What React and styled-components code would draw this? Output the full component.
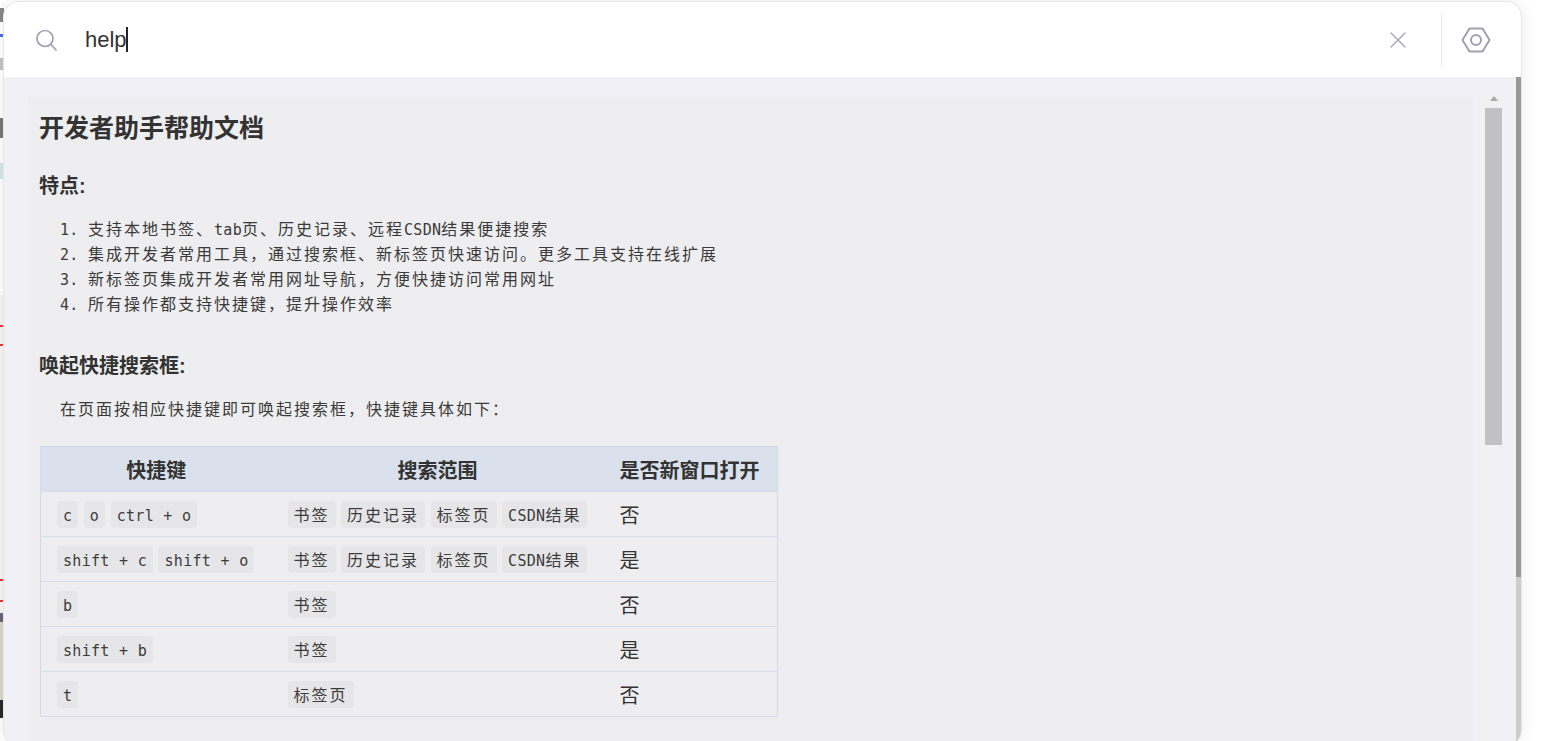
import React from 'react';
import styled, { createGlobalStyle } from 'styled-components';

const Global = createGlobalStyle`
  html, body { margin: 0; padding: 0; background: #fff; overflow: hidden; }
  #root { height: 741px; }
`;

const Page = styled.div`
  position: relative;
  width: 1553px;
  height: 741px;
  overflow: hidden;
  background: #fff;
  font-family: "Liberation Sans", "Noto Sans CJK SC", sans-serif;
`;

/* the page lying behind the panel, visible only as a thin sliver */
const Backdrop = styled.div`
  width: 4px;
  height: 741px;
  display: flex;
  flex-direction: column;
`;

const BackdropBit = styled.div`
  flex: 0 0 ${p => p.$h}px;
  background: ${p => p.$c};
`;

const Panel = styled.div`
  position: absolute;
  left: 3px;
  top: 1px;
  width: 1517px;
  height: 744px;
  display: flex;
  flex-direction: column;
  border: 1px solid #e6e6ea;
  border-bottom: 0;
  border-radius: 16px;
  overflow: hidden;
  background: #f0f0f6;
  box-shadow: 0 0 18px rgba(0, 0, 0, 0.07);
`;

const Header = styled.header`
  flex: 0 0 75px;
  display: flex;
  align-items: center;
  background: #fff;
`;

const SearchSlot = styled.div`
  width: 81px;
  padding-left: 31px;
  box-sizing: border-box;
  display: flex;
  align-items: center;
`;

const Query = styled.div`
  flex: 1;
  display: flex;
  align-items: center;
  height: 26px;
  font-size: 22px;
  line-height: 26px;
  color: #333;
`;

const Caret = styled.span`
  width: 2px;
  height: 25px;
  margin-left: -1px;
  background: #222;
`;

const CloseSlot = styled.div`
  width: 16px;
  height: 16px;
  margin-right: 35px;
  display: flex;
`;

const Divider = styled.div`
  width: 1px;
  height: 54px;
  background: #e9e9ed;
`;

const HexSlot = styled.div`
  width: 79px;
  display: flex;
  justify-content: center;
  padding-right: 11px;
  box-sizing: border-box;
`;

const Body = styled.div`
  flex: 1;
  min-height: 0;
  display: flex;
  padding-left: 24px;
`;

const Content = styled.main`
  flex: 1;
  margin-top: 20px;
  padding: 13px 12px 0;
  background: #eeeef0;
  color: #333;
  overflow: hidden;
`;

const Title = styled.h1`
  margin: 0 0 0 -1px;
  font-size: 25px;
  line-height: 36px;
  font-weight: 700;
  color: #333;
`;

const SubTitle = styled.h3`
  margin: ${p => p.$mt}px 0 0 -1px;
  font-size: 20px;
  line-height: 28px;
  font-weight: 700;
  color: #333;
`;

const Latin = styled.span`
  font-family: "DejaVu Sans Mono", monospace;
  font-size: 15px;
  line-height: 1;
  letter-spacing: 0.3px;
`;

const Han = styled.span`
  font-family: "Noto Sans CJK SC", sans-serif;
  font-size: 16px;
  line-height: 1;
  letter-spacing: 2px;
`;

const Mono = ({ children }) =>
  children.split(/([\u2e80-\uffef]+)/).filter(Boolean).map((part, i) =>
    /[\u2e80-\uffef]/.test(part) ? <Han key={i}>{part}</Han> : <Latin key={i}>{part}</Latin>
  );

const Pre = styled.div`
  margin: ${p => p.$mt}px 0 0;
  padding-left: 20px;
  line-height: 25px;
  color: #3a3a3a;
  white-space: pre;
`;

const Table = styled.table`
  margin-top: 24px;
  width: 737px;
  table-layout: fixed;
  border-collapse: collapse;
  border: 1px solid #cfdcee;
`;

const Th = styled.th`
  height: 45px;
  padding: 0 16px;
  box-sizing: border-box;
  width: ${p => p.$w}px;
  background: #dae1ed;
  font-size: 20px;
  font-weight: 700;
  text-align: ${p => p.$left ? 'left' : 'center'};
  white-space: nowrap;
  color: #333;
`;

const Td = styled.td`
  height: 45px;
  padding: 0 16px;
  box-sizing: border-box;
  border-top: 1px solid #d3dfef;
  font-size: 20px;
  color: #333;
`;

const Chips = styled.div`
  display: flex;
  gap: 5.5px;
`;

const Chip = styled.code`
  display: block;
  height: 27px;
  line-height: 26px;
  padding: 0 6px;
  border-radius: 4px;
  background: #e6e6e8;
  color: #3c3c3c;
  white-space: pre;
`;

const Gutter = styled.div`
  width: 17px;
  margin: 20px 0 0 12px;
  background: #f1f1f1;
  display: flex;
  flex-direction: column;
  align-items: center;
`;

const ArrowUp = styled.div`
  margin-top: -1px;
  width: 0;
  height: 0;
  border-left: 4px solid transparent;
  border-right: 4px solid transparent;
  border-bottom: 5px solid #a8a8a8;
`;

const GutterThumb = styled.div`
  width: 17px;
  height: 337px;
  margin-top: 7px;
  background: #c1c1c1;
`;

const EdgeBar = styled.div`
  width: 5px;
  margin-left: 14px;
  background: #cdcdcd;
`;

const EdgeThumb = styled.div`
  height: 500px;
  background: #999;
`;

const icon = { fill: 'none', stroke: '#a0a0b0', strokeLinecap: 'round' };

const backdrop = [
  [8, '#fff'], [14, '#888'], [12, '#fff'], [3, '#4a68f0'], [21, '#fff'], [12, '#c4c4c4'],
  [48, '#fff'], [20, '#777'], [25, '#fff'], [16, '#d4e6e8'], [116, '#fff'], [30, '#f5f5f5'],
  [2, '#f03030'], [17, '#f5f5f5'], [2, '#f03030'], [233, '#f5f5f5'], [2, '#f03030'],
  [19, '#f5f5f5'], [2, '#f03030'], [11, '#f5f5f5'], [9, '#6b6478'], [78, '#dcd8c8'], [18, '#2a2a28'],
];

const listLines = [
  '1. 支持本地书签、tab页、历史记录、远程CSDN结果便捷搜索',
  '2. 集成开发者常用工具\uff0c通过搜索框、新标签页快速访问。更多工具支持在线扩展',
  '3. 新标签页集成开发者常用网址导航\uff0c方便快捷访问常用网址',
  '4. 所有操作都支持快捷键\uff0c提升操作效率',
];

const rows = [
  [['c', 'o', 'ctrl + o'], ['书签', '历史记录', '标签页', 'CSDN结果'], '否'],
  [['shift + c', 'shift + o'], ['书签', '历史记录', '标签页', 'CSDN结果'], '是'],
  [['b'], ['书签'], '否'],
  [['shift + b'], ['书签'], '是'],
  [['t'], ['标签页'], '否'],
];

const ChipRow = ({ items }) => (
  <Chips>{items.map(t => <Chip key={t}><Mono>{t}</Mono></Chip>)}</Chips>
);

export default function App() {
  return (
    <Page>
      <Global />
      <Backdrop>
        {backdrop.map(([h, c], i) => <BackdropBit key={i} $h={h} $c={c} />)}
      </Backdrop>
      <Panel>
        <Header>
          <SearchSlot>
            <svg width="22" height="22" viewBox="0 0 22 22" {...icon} strokeWidth="1.7">
              <circle cx="10" cy="9.5" r="8" />
              <path d="M16 15.5 L21 21" />
            </svg>
          </SearchSlot>
          <Query>help<Caret /></Query>
          <CloseSlot>
            <svg width="16" height="16" viewBox="0 0 16 16" {...icon} strokeWidth="1.2">
              <path d="M1 1 L15 15 M15 1 L1 15" />
            </svg>
          </CloseSlot>
          <Divider />
          <HexSlot>
            <svg width="30" height="26" viewBox="0 0 30 26" {...icon} strokeWidth="2" strokeLinejoin="round">
              <path d="M8.5 1.5 H21.5 L28.5 13 L21.5 24.5 H8.5 L1.5 13 Z" />
              <circle cx="15" cy="13" r="5" />
            </svg>
          </HexSlot>
        </Header>
        <Body>
          <Content>
            <Title>开发者助手帮助文档</Title>
            <SubTitle $mt={26}>特点:</SubTitle>
            <Pre $mt={17}>
              {listLines.map(line => <div key={line}><Mono>{line}</Mono></div>)}
            </Pre>
            <SubTitle $mt={35}>唤起快捷搜索框:</SubTitle>
            <Pre $mt={17}>
              <div><Mono>{'在页面按相应快捷键即可唤起搜索框\uff0c快捷键具体如下\uff1a'}</Mono></div>
            </Pre>
            <Table>
              <thead>
                <tr>
                  <Th $w={231}>快捷键</Th>
                  <Th $w={332}>搜索范围</Th>
                  <Th $w={174} $left>是否新窗口打开</Th>
                </tr>
              </thead>
              <tbody>
                {rows.map(([keys, scope, yes], i) => (
                  <tr key={i}>
                    <Td><ChipRow items={keys} /></Td>
                    <Td><ChipRow items={scope} /></Td>
                    <Td>{yes}</Td>
                  </tr>
                ))}
              </tbody>
            </Table>
          </Content>
          <Gutter>
            <ArrowUp />
            <GutterThumb />
          </Gutter>
          <EdgeBar><EdgeThumb /></EdgeBar>
        </Body>
      </Panel>
    </Page>
  );
}
